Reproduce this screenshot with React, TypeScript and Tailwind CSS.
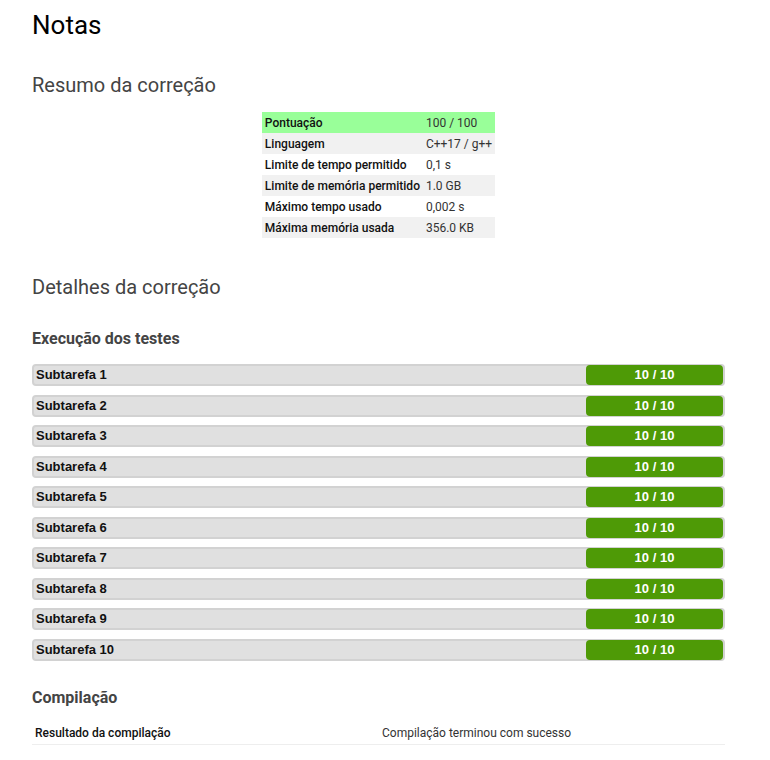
import React from "react";

const summary: [string, string][] = [
    ["Pontuação", "100 / 100"],
    ["Linguagem", "C++17 / g++"],
    ["Limite de tempo permitido", "0,1 s"],
    ["Limite de memória permitido", "1.0 GB"],
    ["Máximo tempo usado", "0,002 s"],
    ["Máxima memória usada", "356.0 KB"],
];

const subtasks = Array.from({ length: 10 }, (_, i) => `Subtarefa ${i + 1}`);

export default function App() {
    return (
        <div className="bg-white min-h-[760px] pl-8 pr-[45px] pt-[10px] font-['Roboto',sans-serif] text-[#222]">
            <h1 className="text-[26px] leading-[30px] text-black">Notas</h1>

            <h2 className="mt-[33px] text-[20px] leading-[24px] text-[#444]">
                Resumo da correção
            </h2>
            <div className="flex justify-center mt-[15px]">
                <table className="text-[12px] border-collapse">
                    <tbody>
                        {summary.map(([k, v], i) => (
                            <tr
                                key={k}
                                className={
                                    i === 0
                                        ? "bg-[#99ff99]"
                                        : i % 2 === 1
                                        ? "bg-[#f1f1f1]"
                                        : "bg-white"
                                }
                            >
                                <td className="h-[21px] pl-[3px] pr-[5px] font-medium text-[#111]">
                                    {k}
                                </td>
                                <td className="h-[21px] pl-[1px] pr-[3px] text-[#333]">{v}</td>
                            </tr>
                        ))}
                    </tbody>
                </table>
            </div>

            <h2 className="mt-[37px] text-[20px] leading-[24px] text-[#444]">
                Detalhes da correção
            </h2>

            <h3 className="mt-[30px] text-[16px] leading-[20px] font-bold text-[#444]">
                Execução dos testes
            </h3>
            <div className="mt-[15px] flex flex-col gap-[8.5px]">
                {subtasks.map((s) => (
                    <div
                        key={s}
                        className="flex items-center h-[22px] rounded-[4px] border-2 border-[#d2d2d2] bg-[#e0e0e0]"
                    >
                        <span className="flex-1 pl-[2px] text-[13px] font-bold text-[#111] font-['Liberation_Sans',Arial,sans-serif]">
                            {s}
                        </span>
                        <span className="w-[137px] h-[20px] flex items-center justify-center rounded-[4px] bg-[#4e9a06] text-white text-[13px] font-bold font-['Liberation_Sans',Arial,sans-serif]">
                            10 / 10
                        </span>
                    </div>
                ))}
            </div>

            <h3 className="mt-[27px] text-[16px] leading-[20px] font-bold text-[#444]">
                Compilação
            </h3>
            <div className="mt-[15px] flex items-center h-[22px] border-b border-[#eeeeee] text-[12px]">
                <span className="w-[350px] pl-[3px] font-medium text-[#111]">
                    Resultado da compilação
                </span>
                <span className="text-[#333]">Compilação terminou com sucesso</span>
            </div>
        </div>
    );
}
